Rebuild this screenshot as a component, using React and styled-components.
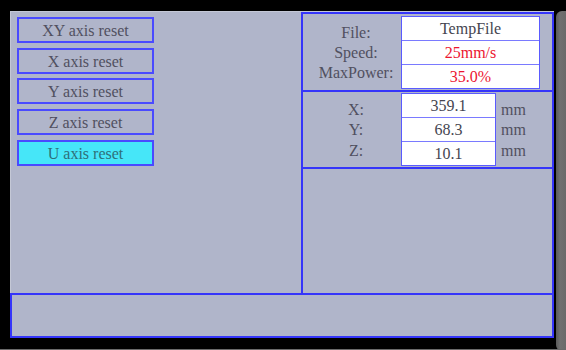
import React from 'react';
import styled, { createGlobalStyle } from 'styled-components';

const GlobalStyle = createGlobalStyle`
  html, body {
    margin: 0;
    padding: 0;
    background: #000;
  }
`;

const AXIS_BUTTONS = [
  { id: 1, label: 'XY axis reset' },
  { id: 2, label: 'X axis reset' },
  { id: 3, label: 'Y axis reset' },
  { id: 4, label: 'Z axis reset' },
  { id: 5, label: 'U axis reset', active: true },
];

const JOB_INFO = [
  { id: 1, label: 'File:', value: 'TempFile' },
  { id: 2, label: 'Speed:', value: '25mm/s', warn: true },
  { id: 3, label: 'MaxPower:', value: '35.0%', warn: true },
];

const POSITION = [
  { id: 1, label: 'X:', value: '359.1' },
  { id: 2, label: 'Y:', value: '68.3' },
  { id: 3, label: 'Z:', value: '10.1' },
];

const App = () => {
  return (
    <>
      <GlobalStyle />
      <Frame>
        <Row>
          <Panel>
            <Main>
              <AxisArea>
                {AXIS_BUTTONS.map(({ id, label, active }) => (
                  <AxisButton key={id} $active={active}>
                    {label}
                  </AxisButton>
                ))}
              </AxisArea>
              <SideColumn>
                <Section $height={76}>
                  <Labels $width={96} $line={20}>
                    {JOB_INFO.map(item => (
                      <span key={item.id}>{item.label}</span>
                    ))}
                  </Labels>
                  <Boxes $width={137}>
                    {JOB_INFO.map(item => (
                      <ValueBox key={item.id} $warn={item.warn}>
                        {item.value}
                      </ValueBox>
                    ))}
                  </Boxes>
                </Section>
                <Section $height={75}>
                  <Labels $width={96} $line={20.5}>
                    {POSITION.map(item => (
                      <span key={item.id}>{item.label}</span>
                    ))}
                  </Labels>
                  <Boxes $width={93}>
                    {POSITION.map(item => (
                      <ValueBox key={item.id}>{item.value}</ValueBox>
                    ))}
                  </Boxes>
                  <Units>
                    {POSITION.map(item => (
                      <span key={item.id}>mm</span>
                    ))}
                  </Units>
                </Section>
                <EmptySection />
              </SideColumn>
            </Main>
            <StatusBar />
          </Panel>
          <Shade />
        </Row>
      </Frame>
    </>
  );
};

const Frame = styled.div`
  width: 566px;
  height: 350px;
  box-sizing: border-box;
  padding: 11px 0 0 10px;
  background: #000;
  border-bottom: 1px solid #6a6a6a;
  overflow: hidden;
  font-family: "Liberation Serif", "Times New Roman", serif;
`;

const Row = styled.div`
  display: flex;
  gap: 2px;
  height: 338px;
`;

const Panel = styled.div`
  width: 544px;
  height: 327px;
  display: flex;
  flex-direction: column;
  background: #b0b5ca;
  box-sizing: border-box;
  border-top: 1px solid #c4c8d6;
`;

const Main = styled.div`
  display: flex;
  height: 281px;
`;

const AxisArea = styled.div`
  width: 291px;
  box-sizing: border-box;
  padding: 5px 0 0 6px;
  border-left: 1px solid #c4c8d6;
  display: flex;
  flex-direction: column;
  gap: 4.7px;
`;

const AxisButton = styled.div`
  width: 137px;
  height: 26px;
  box-sizing: border-box;
  border: 2px solid #4a4aff;
  background: ${({ $active }) => ($active ? '#46e6f8' : 'transparent')};
  color: ${({ $active }) => ($active ? '#2f6f78' : '#505060')};
  font-size: 16px;
  line-height: 23px;
  text-align: center;
`;

const SideColumn = styled.div`
  flex: 1;
  display: flex;
  flex-direction: column;
  box-sizing: border-box;
  border: 2px solid #3535fa;
  border-bottom: none;
`;

const Section = styled.div`
  height: ${({ $height }) => $height}px;
  display: flex;
  align-items: center;
  border-bottom: 2px solid #3535fa;
  color: #505060;
  font-size: 16px;
`;

const EmptySection = styled.div`
  flex: 1;
`;

const Labels = styled.div`
  width: ${({ $width }) => $width}px;
  box-sizing: border-box;
  padding-left: 10px;
  display: flex;
  flex-direction: column;
  align-items: center;
  line-height: ${({ $line }) => $line}px;
  margin-top: 2px;
`;

const Boxes = styled.div`
  width: ${({ $width }) => $width}px;
  display: flex;
  flex-direction: column;
  border: 1px solid #5a5aff;
  margin-left: 2px;
`;

const ValueBox = styled.div`
  height: 23px;
  line-height: 23px;
  background: #fff;
  text-align: center;
  color: ${({ $warn }) => ($warn ? '#ec1530' : '#454550')};
  & + & {
    border-top: 1px solid #7a7aff;
  }
`;

const Units = styled.div`
  display: flex;
  flex-direction: column;
  line-height: 20.5px;
  margin: 2px 0 0 5px;
`;

const StatusBar = styled.div`
  flex: 1;
  box-sizing: border-box;
  border: 2px solid #3535fa;
`;

const Shade = styled.div`
  width: 10px;
  height: 340px;
  border-radius: 6px 0 0 6px;
  background: linear-gradient(to right, #5a5a5a, #707070 40%, #6a6a6a);
`;

export default App;
